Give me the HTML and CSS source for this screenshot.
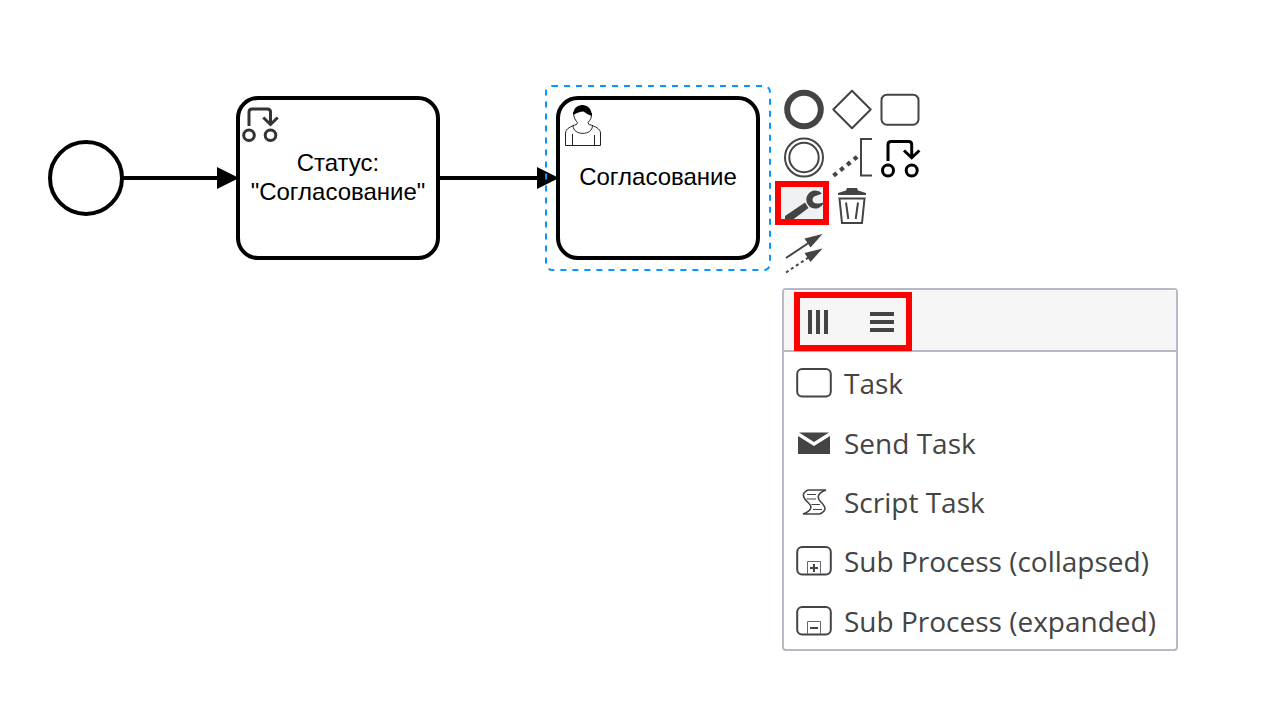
FILE: index.html
```
<!DOCTYPE html>
<html lang="ru">
<head>
<meta charset="utf-8">
<title>Process editor</title>
<link rel="stylesheet" href="styles.css">
</head>
<body>
<main class="canvas">
  <svg class="connections" width="780" height="280" aria-hidden="true">
    <circle cx="86" cy="178" r="36"/>
    <path d="M123 178H220M440 178H540"/>
    <path class="arrowhead" d="M217 167L239 178L217 189ZM537 167L559 178L537 189Z"/>
  </svg>

  <div class="node node-status">
    <svg class="node-icon" width="48" height="48" viewBox="0 0 48 48" aria-hidden="true">
      <g class="status-shape"><path d="M9 26V12Q9 9 12 9H27.500Q30.500 9 30.500 12V24M23.300 17.500L30.500 24.500L37.700 17.500"/><circle cx="9" cy="35.300" r="5.300"/><circle cx="30.500" cy="35.300" r="5.300"/></g>
    </svg>
    <span>Статус:<br>"Согласование"</span>
  </div>

  <div class="node node-approval">
    <svg class="node-icon" width="48" height="48" viewBox="0 0 48 48" aria-hidden="true">
      <path class="person-line" d="M13.500 12C13.500 17 15 20 17.500 22.500L16.500 24.500C11 26 5.500 29 5.500 33V45.500H40.500V33C40.500 29 35 26 29 24.500L28 22.500C30.500 20 32 17 31.500 13M13 25.500C13 36 32.500 36 32.500 25.500M12.500 45V34M34.500 45V35"/>
      <path class="person-hair" d="M13.300 15C12.500 1.500 32.500 1.500 31.800 16C28.500 15 26 13 23.500 11.500C20 11.500 17 13 13.300 15Z"/>
    </svg>
    <span>Согласование</span>
  </div>

  <svg class="selection" width="228" height="188" aria-hidden="true"><rect x="2" y="2" width="224" height="184" rx="6"/></svg>

  <div class="context-pad" role="toolbar" aria-label="Element actions">
    <button class="pad-entry" type="button" aria-label="End event"><svg viewBox="0 0 44 44"><circle class="thick" cx="22" cy="22.500" r="16.800"/></svg></button>
    <button class="pad-entry" type="button" aria-label="Gateway"><svg viewBox="0 0 44 44"><path d="M22 3.800L40.700 22.500L22 41.200L3.300 22.500Z" stroke-linejoin="round"/></svg></button>
    <button class="pad-entry" type="button" aria-label="Task"><svg viewBox="0 0 44 44"><rect x="3.500" y="7.700" width="37" height="30" rx="5.500"/></svg></button>
    <button class="pad-entry" type="button" aria-label="Intermediate event"><svg viewBox="0 0 44 44"><circle cx="22" cy="22.500" r="19"/><circle cx="22" cy="22.500" r="14.700"/></svg></button>
    <button class="pad-entry" type="button" aria-label="Text annotation"><svg viewBox="0 0 44 44"><path d="M42 4H31V40.500H42"/><path d="M3.500 40.700L29.500 20" stroke-width="4.200" stroke-dasharray="4.200 4.500"/></svg></button>
    <button class="pad-entry pad-entry-dark" type="button" aria-label="Status"><svg viewBox="0 0 44 44"><path d="M10 26V9.500Q10 6.500 13 6.500H30.700Q33.700 6.500 33.700 9.500V22M26 15.500L33.700 22.800L41.400 15.500"/><circle cx="10" cy="35.500" r="5.500"/><circle cx="33.700" cy="35.500" r="5.500"/></svg></button>
    <button class="pad-entry" type="button" aria-label="Change type"><svg viewBox="0 0 44 44"><rect class="tint" x="-3" y="1" width="46" height="38"/><path class="solid" d="M23 19.500L26.500 25L9 38H3V33Z"/><path class="solid" d="M40 10.500A9 9 0 1 0 41.800 19.500L37 20.500C28.500 21.500 29 13 35 12.500Z"/></svg></button>
    <button class="pad-entry" type="button" aria-label="Remove"><svg viewBox="0 0 44 44"><path class="solid" d="M8 12V10L16 7.500L17 5H27L28 7.500L36 10V12Z"/><path d="M9.500 15.500H34.500L32 40H12ZM16 19.500L18.300 36M28 19.500L25.700 36"/></svg></button>
    <span></span>
    <button class="pad-entry" type="button" aria-label="Connect"><svg viewBox="0 0 44 44"><path d="M4 27L28 11"/><path d="M4 41.500L28 25.500" stroke-dasharray="3 3"/><path class="solid" d="M40.500 3L22.500 7.500L28.500 16.500ZM40.500 17.500L22.500 22L28.500 31Z"/></svg></button>
  </div>
  <div class="highlight highlight-wrench"></div>

  <section class="popup" aria-label="Change element">
    <header class="popup-header">
      <button class="header-entry" type="button" aria-label="Parallel multi instance"><svg viewBox="0 0 24 24"><path d="M2 0V24M10 0V24M18 0V24"/></svg></button>
      <button class="header-entry" type="button" aria-label="Sequential multi instance"><svg viewBox="0 0 24 24"><path d="M0 4H24M0 12H24M0 20H24"/></svg></button>
    </header>
    <div class="popup-body">
      <button class="popup-entry" type="button"><svg viewBox="0 0 36 36"><rect x="1.200" y="4" width="33.600" height="27.500" rx="5"/></svg>Task</button>
      <button class="popup-entry" type="button"><svg viewBox="0 0 36 36"><path class="solid" d="M2 11L18 21L34 11V29H2ZM3 7.500H33L18 17Z"/></svg>Send Task</button>
      <button class="popup-entry" type="button"><svg viewBox="0 0 36 36"><path d="M12 6H30C22 9 20.500 13 24 17C29 22 32 26 24 30H7C15 27 17 23 12.500 19C6 13 5.500 9 12 6Z" stroke-width="1.600"/><path d="M11 10.500H20M10.500 15H20M15.500 20.500H24M17 25.500H26" stroke-width="1"/></svg>Script Task</button>
      <button class="popup-entry" type="button"><svg viewBox="0 0 36 36"><rect x="1.200" y="4" width="33.600" height="27.500" rx="5"/><path class="marker-box" d="M11.500 31V18.500H24.500V31"/><path d="M18 21V29M14 25H22"/></svg>Sub Process (collapsed)</button>
      <button class="popup-entry" type="button"><svg viewBox="0 0 36 36"><rect x="1.200" y="4" width="33.600" height="27.500" rx="5"/><path class="marker-box" d="M11.500 31V18.500H24.500V31"/><path d="M14 25H22"/></svg>Sub Process (expanded)</button>
    </div>
  </section>
  <div class="highlight highlight-markers"></div>
</main>
</body>
</html>
```
FILE: styles.css
```
* { box-sizing: border-box; }

body {
  margin: 0;
  background: #fff;
}

button {
  padding: 0;
  border: 0;
  background: none;
  color: inherit;
  font: inherit;
  cursor: pointer;
}

.canvas {
  position: relative;
  min-height: 100vh;
  overflow: hidden;
}

.connections,
.selection {
  position: absolute;
  fill: none;
  pointer-events: none;
}

.connections {
  top: 0;
  left: 0;
  stroke: #000;
  stroke-width: 4;
}

.connections .arrowhead {
  fill: #000;
  stroke: none;
}

.selection {
  top: 84px;
  left: 544px;
  stroke: #0896ff;
  stroke-width: 2;
  stroke-dasharray: 6 6;
}

/* Diagram nodes */
.node {
  position: absolute;
  top: 96px;
  width: 204px;
  height: 164px;
  display: flex;
  align-items: center;
  justify-content: center;
  padding-bottom: 3px;
  border: 4px solid #000;
  border-radius: 22px;
  font: 24px/29px "Liberation Sans", Arial, sans-serif;
  color: #000;
  text-align: center;
}

.node-status { left: 236px; }
.node-approval { left: 556px; }

.node-icon {
  position: absolute;
  top: 0;
  left: 0;
  fill: none;
}

.status-shape {
  stroke: #333;
  stroke-width: 3;
}

.person-line {
  stroke: #222;
  stroke-width: 1;
}

.person-hair { fill: #000; }

.solid {
  fill: #444;
  stroke: none;
}

/* Context pad */
.context-pad {
  position: absolute;
  top: 87px;
  left: 782px;
  display: grid;
  grid-template-columns: repeat(3, 44px);
  gap: 4px;
}

.pad-entry { height: 44px; }

.pad-entry svg {
  display: block;
  width: 44px;
  height: 44px;
  overflow: visible;
  fill: none;
  stroke: #444;
  stroke-width: 2;
}

.pad-entry .thick { stroke-width: 6; }

.pad-entry-dark svg {
  stroke: #000;
  stroke-width: 3;
}

.pad-entry .tint {
  fill: #f0f1f3;
  stroke: none;
}

.pad-entry .solid { stroke: none; }

/* Replace menu */
.popup {
  position: absolute;
  top: 288px;
  left: 782px;
  width: 396px;
  border: 2px solid #b9b9c6;
  border-radius: 4px;
  background: #fff;
  color: #444;
  font: 28px/38px "Open Sans", sans-serif;
}

.popup-header {
  display: flex;
  gap: 38px;
  padding: 20px 24px 16px;
  border-bottom: 2px solid #b9b9c6;
  background: #f6f6f6;
}

.header-entry svg {
  display: block;
  width: 24px;
  height: 24px;
  fill: none;
  stroke: #444;
  stroke-width: 4;
}

.popup-body {
  display: grid;
  grid-auto-rows: 1fr;
  min-height: 297px;
}

.popup-entry {
  display: flex;
  align-items: center;
  gap: 12px;
  padding: 3px 12px 0;
  text-align: left;
  white-space: nowrap;
}

.popup-entry svg {
  flex: none;
  width: 36px;
  height: 36px;
  fill: none;
  stroke: #444;
  stroke-width: 2;
}

.popup-entry .marker-box {
  stroke: #667;
  stroke-width: 1;
}

/* Red callouts */
.highlight {
  position: absolute;
  border: 6px solid #f00;
  pointer-events: none;
}

.highlight-wrench {
  top: 181px;
  left: 775px;
  width: 54px;
  height: 44px;
}

.highlight-markers {
  top: 292px;
  left: 794px;
  width: 118px;
  height: 59px;
}
```
